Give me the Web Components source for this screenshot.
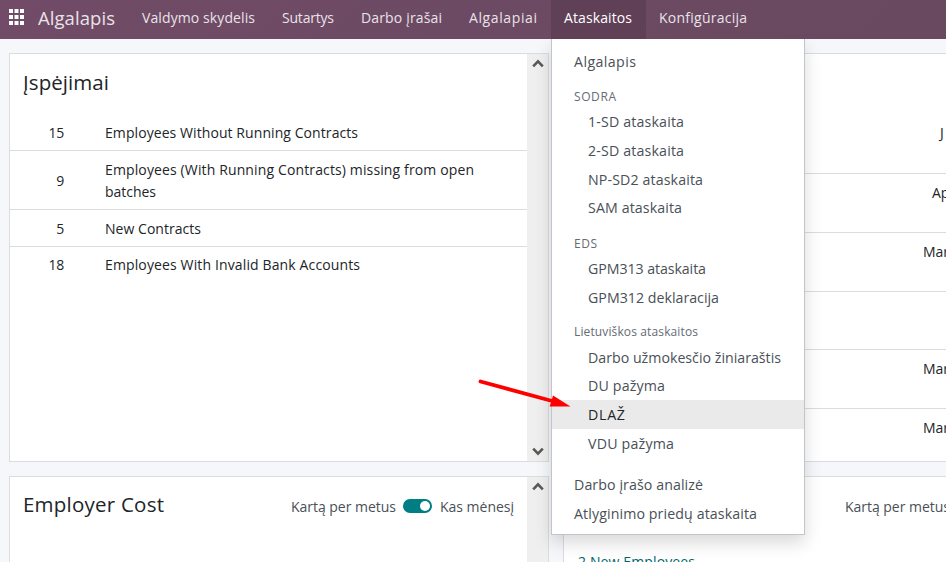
<!DOCTYPE html>
<html lang="lt">
<head>
<meta charset="utf-8">
<title>Algalapis</title>
<style>
html,body{margin:0;height:100%;overflow:hidden}
body{font-family:"Open Sans","Noto Sans",sans-serif;font-size:14px;background:#f5f7fb}
</style>
</head>
<body>
<payroll-app></payroll-app>
<script>
function define(name, markup, setup) {
  const tpl = document.createElement('template');
  tpl.innerHTML = markup;
  customElements.define(name, class extends HTMLElement {
    constructor() {
      super();
      this.attachShadow({mode: 'open'}).append(tpl.content.cloneNode(true));
    }
    connectedCallback() { if (setup) setup(this, this.shadowRoot); }
  });
}

define('payroll-app', `<style>
:host{display:flex;flex-direction:column;width:946px;height:562px;overflow:hidden;position:relative}
main{display:grid;grid-template-columns:540px 540px;grid-template-rows:409px 409px;gap:14px;padding:14px 0 0 9px}
report-menu{position:absolute;left:551px;top:39px}
pointer-arrow{position:absolute;left:470px;top:370px}
.more{padding:15px 0 0 14px;color:#01666b}
</style>
<nav-bar></nav-bar>
<main>
<dash-card>
<fit-text slot="title" w="86">Įspėjimai</fit-text>
<warning-row><span slot="n">15</span><fit-text w="253">Employees Without Running Contracts</fit-text></warning-row>
<warning-row><span slot="n">9</span><fit-text w="369">Employees (With Running Contracts) missing from open</fit-text><fit-text w="51">batches</fit-text></warning-row>
<warning-row><span slot="n">5</span><fit-text w="96">New Contracts</fit-text></warning-row>
<warning-row class="end"><span slot="n">18</span><fit-text w="255">Employees With Invalid Bank Accounts</fit-text></warning-row>
</dash-card>
<dash-card>
<batch-row style="--x:376px;--h:59px">J</batch-row>
<batch-row style="--x:368px">Ap</batch-row>
<batch-row style="--x:359px">Mar</batch-row>
<batch-row style="--h:57px"></batch-row>
<batch-row style="--x:359px">Mar</batch-row>
<batch-row style="--x:359px">Mar</batch-row>
</dash-card>
<dash-card low><fit-text slot="title" w="141">Employer Cost</fit-text><period-toggle slot="tools"></period-toggle></dash-card>
<dash-card low><period-toggle slot="tools"></period-toggle><div class="more"><fit-text w="117">2 New Employees</fit-text></div></dash-card>
</main>
<report-menu></report-menu>
<pointer-arrow></pointer-arrow>`);

define('nav-bar', `<style>
:host{display:flex;height:39px;flex:none;align-items:center;background:linear-gradient(135deg,#714b67,#68495f);color:#e9e3e8;position:relative;z-index:2}
svg{margin:-5px 0 0 9px;width:15px;height:16px;flex:none}
.brand{font-size:18.500px;margin:-5px 14px 0 14px;width:77px}
</style>
<svg viewBox="0 0 15 16" fill="#fff"><path d="M0 0h4v4H0zM5.5 0h4v4h-4zM11 0h4v4h-4zM0 6h4v4H0zM5.500 6h4v4h-4zM11 6h4v4h-4zM0 12h4v4H0zM5.500 12h4v4h-4zM11 12h4v4h-4z"/></svg>
<fit-text class="brand" w="77">Algalapis</fit-text>
<nav-item><fit-text w="113">Valdymo skydelis</fit-text></nav-item>
<nav-item><fit-text w="52">Sutartys</fit-text></nav-item>
<nav-item><fit-text w="81">Darbo įrašai</fit-text></nav-item>
<nav-item><fit-text w="68">Algalapiai</fit-text></nav-item>
<nav-item active><fit-text w="68">Ataskaitos</fit-text></nav-item>
<nav-item><fit-text w="88">Konfigūracija</fit-text></nav-item>`);

define('nav-item', `<style>
:host{display:flex;align-items:center;height:35px;padding:0 14px 4px 13px}
:host([active]){background:#5f4057;color:#fff}
</style><slot></slot>`);

define('dash-card', `<style>
:host{display:flex;box-sizing:border-box;background:#fff;border:1px solid #dadddd;color:#212529;overflow:hidden}
.body{flex:1;min-width:0}
header{display:flex;height:60px;align-items:center;padding:0 13px;box-sizing:border-box}
:host([low]) header{padding-bottom:2px}
.title{font-size:20.500px;margin-top:-5px}
.tools{margin-left:auto}
aside{width:21px;flex:none;background:#efefef;display:flex;flex-direction:column;justify-content:space-between;align-items:center;padding:4px 0;box-sizing:border-box}
svg{width:12px;height:12px;display:block}
path{fill:none;stroke:#595959;stroke-width:2.6}
</style>
<div class="body"><header><div class="title"><slot name="title"></slot></div><div class="tools"><slot name="tools"></slot></div></header><slot></slot></div>
<aside><svg viewBox="0 0 12 12"><path d="M1.200 8.400 6 3.400 10.800 8.400"/></svg><svg viewBox="0 0 12 12"><path d="M1.200 3.600 6 8.600 10.800 3.600"/></svg></aside>`);

define('warning-row', `<style>
:host{display:flex;align-items:center;line-height:22px;padding:8px 0 6px;border-bottom:1px solid #dadddd}
:host(.end){border-bottom:0;padding-top:7px}
.n{width:54px;text-align:right;letter-spacing:-.3px;margin-right:41px}
.t{display:flex;flex-direction:column;align-items:flex-start}
</style><div class="n"><slot name="n"></slot></div><div class="t"><slot></slot></div>`);

define('batch-row', `<style>
:host{display:block;height:var(--h,58px);padding-left:var(--x,0);border-bottom:1px solid #dadddd;line-height:38px}
:host(:last-of-type){border-bottom:0}
</style><slot></slot>`);

define('period-toggle', `<style>
:host{display:flex;align-items:center;color:#495057}
i{width:29px;height:14px;border-radius:7px;background:#017e84;margin:-1px 8px 0 7px;display:flex;align-items:center;justify-content:flex-end}
i::after{content:"";width:10px;height:10px;border-radius:50%;background:#fff;margin-right:2px}
</style><fit-text w="105">Kartą per metus</fit-text><i></i><fit-text w="74">Kas mėnesį</fit-text>`);

define('report-menu', `<style>
:host{display:block;box-sizing:border-box;width:254px;height:496px;background:#fff;border:1px solid #c3c5cd;border-top:0;padding-top:8.200px;box-shadow:0 8px 16px rgba(0,0,0,.15);color:#495057;z-index:1}
section{margin:9.600px 0 0}
.eds{margin-top:9.950px}
.lt{margin-top:9.550px}
.last{margin-top:12.300px}
</style>
<menu-item><fit-text w="62">Algalapis</fit-text></menu-item>
<section><menu-item head><fit-text w="42">SODRA</fit-text></menu-item>
<menu-item sub><fit-text w="96">1-SD ataskaita</fit-text></menu-item>
<menu-item sub><fit-text w="96">2-SD ataskaita</fit-text></menu-item>
<menu-item sub><fit-text w="115">NP-SD2 ataskaita</fit-text></menu-item>
<menu-item sub><fit-text w="94">SAM ataskaita</fit-text></menu-item></section>
<section class="eds"><menu-item head><fit-text w="23">EDS</fit-text></menu-item>
<menu-item sub><fit-text w="118">GPM313 ataskaita</fit-text></menu-item>
<menu-item sub><fit-text w="131">GPM312 deklaracija</fit-text></menu-item></section>
<section class="lt"><menu-item head><fit-text w="124">Lietuviškos ataskaitos</fit-text></menu-item>
<menu-item sub><fit-text w="193">Darbo užmokesčio žiniaraštis</fit-text></menu-item>
<menu-item sub><fit-text w="77">DU pažyma</fit-text></menu-item>
<menu-item sub active><fit-text w="37">DLAŽ</fit-text></menu-item>
<menu-item sub><fit-text w="86">VDU pažyma</fit-text></menu-item></section>
<section class="last"><menu-item><fit-text w="129">Darbo įrašo analizė</fit-text></menu-item>
<menu-item><fit-text w="183">Atlyginimo priedų ataskaita</fit-text></menu-item></section>`);

define('menu-item', `<style>
:host{display:flex;align-items:center;height:28.800px;padding-left:22px;font-size:14.200px}
:host([sub]){padding-left:36px}
:host([head]){height:21.600px;font-size:12px;color:#666b75}
:host([active]){background:#eaeaea;color:#212529}
</style><slot></slot>`);

define('pointer-arrow', `<style>:host{display:block;width:110px;height:45px;z-index:3}svg{display:block}</style>
<svg width="110" height="45" viewBox="0 0 110 45"><path d="M10.500 11.500 84 31.500" stroke="#f00" stroke-width="3.800" stroke-linecap="round"/><path d="M83 25.500 100.500 36.500 79.700 36.500z" fill="#f00"/></svg>`);

/* Label whose tracking is adjusted so that it occupies the width given in "w". */
define('fit-text', `<style>:host{display:block;white-space:nowrap}span{display:inline-block}</style><span><slot></slot></span>`,
  (el, root) => {
    const span = root.querySelector('span');
    const w = +el.getAttribute('w');
    el.style.width = w + 'px';
    const gap = (w - span.getBoundingClientRect().width) / (el.textContent.length - 1);
    span.style.letterSpacing = gap.toFixed(3) + 'px';
  });
</script>
</body>
</html>
